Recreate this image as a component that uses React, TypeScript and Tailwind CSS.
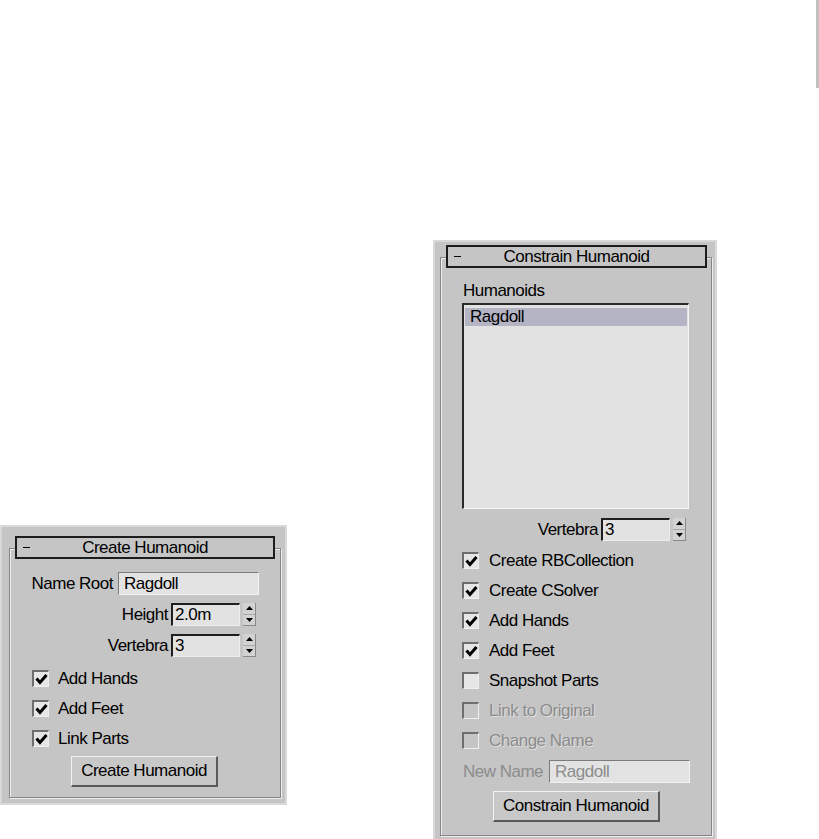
import type { ReactNode } from 'react'

const ui = "font-['Liberation_Sans',Arial,sans-serif] text-[17px] tracking-[-0.5px] leading-[18px] text-black"

function TitleBar({ title, w }: { title: string; w: string }) {
  return (
    <div className={`${w} h-[23px] -mt-[13px] ml-[5px] flex items-center border-2 border-[#1c1c1c] bg-[#c5c5c5]`}>
      <span className="w-[30px] pl-[6px] flex items-center">
        <span className="block w-[7px] h-[1px] bg-black" />
      </span>
      <span className="flex-1 text-center">{title}</span>
      <span className="w-[30px]" />
    </div>
  )
}

function Spinner() {
  return (
    <div className="ml-[3px] w-[13px] h-[23px] flex flex-col bg-[#d2d2d2] border-r border-b border-[#8a8a8a]">
      <div className="flex-1 flex items-center justify-center border-b border-[#a8a8a8]">
        <svg width="7" height="4" viewBox="0 0 7 4"><polygon points="3.5,0 7,4 0,4" fill="#000" /></svg>
      </div>
      <div className="flex-1 flex items-center justify-center">
        <svg width="7" height="4" viewBox="0 0 7 4"><polygon points="0,0 7,0 3.5,4" fill="#000" /></svg>
      </div>
    </div>
  )
}

function SpinnerRow({ label, value, labelW, inputW }: { label: string; value: string; labelW: string; inputW: string }) {
  return (
    <div className="flex items-center h-[23px]">
      <span className={`${labelW} text-right pr-[3px]`}>{label}</span>
      <div className={`${inputW} h-[23px] flex items-center pl-[2px] bg-[#e2e2e2] border-t-2 border-l-2 border-t-[#1e1e1e] border-l-[#1e1e1e] border-b border-r border-b-[#ececec] border-r-[#ececec]`}>
        {value}
      </div>
      <Spinner />
    </div>
  )
}

function TextRow({ label, value, disabled }: { label: string; value: string; disabled?: boolean }) {
  return (
    <div className="flex items-center h-[23px] pl-[22px]">
      <span className={disabled ? 'text-[#8c8c8c]' : ''}>{label}</span>
      <div
        className={`ml-[6px] w-[141px] h-[23px] flex items-center pl-[5px] bg-[#e3e3e3] border-t border-l border-t-[#7c7c7c] border-l-[#7c7c7c] border-b border-r border-b-[#f2f2f2] border-r-[#f2f2f2] ${disabled ? 'text-[#8c8c8c]' : ''}`}
      >
        {value}
      </div>
    </div>
  )
}

function CheckRow({ label, checked, disabled, pl, gap }: { label: string; checked?: boolean; disabled?: boolean; pl: string; gap: string }) {
  return (
    <div className={`flex items-center h-[17px] ${pl}`}>
      <div
        className={`w-[17px] h-[17px] flex items-center justify-center border-t-2 border-l-2 border-t-[#6e6e6e] border-l-[#6e6e6e] border-b border-r border-b-[#efefef] border-r-[#efefef] ${disabled ? 'bg-[#c5c5c5]' : 'bg-[#e6e6e6]'}`}
      >
        {checked && (
          <svg width="13" height="12" viewBox="0 0 13 12">
            <polyline points="1.5,5.5 5,9.5 11.5,2" fill="none" stroke="#000" strokeWidth="3" />
          </svg>
        )}
      </div>
      <span className={`${gap} ${disabled ? 'text-[#8c8c8c] [text-shadow:1px_1px_0_#dedede]' : ''}`}>{label}</span>
    </div>
  )
}

function PushButton({ label, className }: { label: string; className: string }) {
  return (
    <div
      className={`${className} h-[31px] flex items-center justify-center bg-[#c8c8c8] border-t border-l border-t-[#f2f2f2] border-l-[#f2f2f2] border-b-2 border-r-2 border-b-[#5a5a5a] border-r-[#5a5a5a]`}
    >
      {label}
    </div>
  )
}

function Frame({ children, h }: { children: ReactNode; h: string }) {
  return (
    <div className={`w-[272px] ${h} border border-[#858585] shadow-[inset_1px_1px_0_#ededed,1px_1px_0_#ededed]`}>
      {children}
    </div>
  )
}

function CreatePanel() {
  return (
    <div className={`${ui} mt-[525px] w-[287px] h-[280px] shrink-0 bg-[#c5c5c5] border-2 border-[#d9d9d9] pt-[21px] pl-[7px]`}>
      <Frame h="h-[250px]">
        <TitleBar title="Create Humanoid" w="w-[260px]" />
        <div className="mt-[13px] flex items-center h-[23px]">
          <span className="w-[103px] text-right">Name Root</span>
          <div className="ml-[5px] w-[141px] h-[23px] flex items-center pl-[5px] bg-[#e3e3e3] border-t border-l border-t-[#7c7c7c] border-l-[#7c7c7c] border-b border-r border-b-[#f2f2f2] border-r-[#f2f2f2]">
            Ragdoll
          </div>
        </div>
        <div className="mt-[8px]">
          <SpinnerRow label="Height" value="2.0m" labelW="w-[161px]" inputW="w-[69px]" />
        </div>
        <div className="mt-[8px]">
          <SpinnerRow label="Vertebra" value="3" labelW="w-[161px]" inputW="w-[69px]" />
        </div>
        <div className="mt-[13px] flex flex-col gap-[13px]">
          <CheckRow label="Add Hands" checked pl="pl-[22px]" gap="ml-[9px]" />
          <CheckRow label="Add Feet" checked pl="pl-[22px]" gap="ml-[9px]" />
          <CheckRow label="Link Parts" checked pl="pl-[22px]" gap="ml-[9px]" />
        </div>
        <PushButton label="Create Humanoid" className="mt-[9px] ml-[61px] w-[147px]" />
      </Frame>
    </div>
  )
}

function ConstrainPanel() {
  return (
    <div className={`${ui} ml-[146px] mt-[240px] w-[284px] h-[599px] shrink-0 bg-[#c5c5c5] border-2 border-b-0 border-[#d9d9d9] pt-[15px] pl-[5px]`}>
      <Frame h="h-[579px]">
        <TitleBar title="Constrain Humanoid" w="w-[261px]" />
        <div className="mt-[14px] pl-[22px]">Humanoids</div>
        <div className="mt-[3px] ml-[21px] w-[227px] h-[206px] bg-[#e2e2e2] border-t-2 border-l-2 border-t-[#2a2a2a] border-l-[#2a2a2a] border-b border-r border-b-[#f4f4f4] border-r-[#f4f4f4] pt-[3px] px-[1px]">
          <div className="h-[18px] bg-[#b4b4c4] pl-[5px] flex items-center">Ragdoll</div>
        </div>
        <div className="mt-[9px]">
          <SpinnerRow label="Vertebra" value="3" labelW="w-[160px]" inputW="w-[69px]" />
        </div>
        <div className="mt-[11px] flex flex-col gap-[13px]">
          <CheckRow label="Create RBCollection" checked pl="pl-[21px]" gap="ml-[10px]" />
          <CheckRow label="Create CSolver" checked pl="pl-[21px]" gap="ml-[10px]" />
          <CheckRow label="Add Hands" checked pl="pl-[21px]" gap="ml-[10px]" />
          <CheckRow label="Add Feet" checked pl="pl-[21px]" gap="ml-[10px]" />
          <CheckRow label="Snapshot Parts" pl="pl-[21px]" gap="ml-[10px]" />
          <CheckRow label="Link to Original" disabled pl="pl-[21px]" gap="ml-[10px]" />
          <CheckRow label="Change Name" disabled pl="pl-[21px]" gap="ml-[10px]" />
        </div>
        <div className="mt-[11px]">
          <TextRow label="New Name" value="Ragdoll" disabled />
        </div>
        <PushButton label="Constrain Humanoid" className="mt-[8px] ml-[52px] w-[167px]" />
      </Frame>
    </div>
  )
}

export default function App() {
  return (
    <div className="w-[819px] h-[839px] bg-white overflow-hidden flex items-start">
      <CreatePanel />
      <ConstrainPanel />
      <div className="ml-[99px] w-[3px] h-[88px] shrink-0 bg-[#c0c0c0]" />
    </div>
  )
}
